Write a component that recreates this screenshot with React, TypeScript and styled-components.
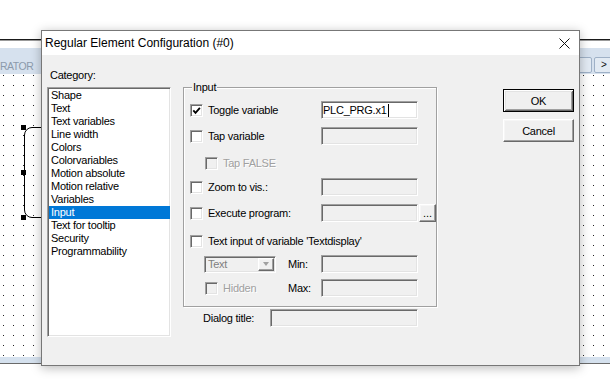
import React from "react";
import styled, { createGlobalStyle, css } from "styled-components";

const UI_FONT = `"Liberation Sans", Arial, sans-serif`;

const GlobalStyle = createGlobalStyle`
  html, body { margin: 0; padding: 0; background: #ffffff; }
  body { font-family: ${UI_FONT}; }
`;

const sunken = css`
  border: 1px solid;
  border-color: #a0a0a0 #ffffff #ffffff #a0a0a0;
  box-shadow: inset 1px 1px 0 #696969, inset -1px -1px 0 #e3e3e3;
`;

const raised = css`
  border: 1px solid;
  border-color: #ffffff #696969 #696969 #ffffff;
  box-shadow: inset -1px -1px 0 #a0a0a0, inset 1px 1px 0 #f6f6f6;
`;

/* ---------- background editor ---------- */

const Screen = styled.div`
  position: relative;
  width: 610px;
  height: 380px;
  display: flex;
  flex-direction: column;
  background: #ffffff;
  overflow: hidden;
`;

const TopSpace = styled.div`
  flex: none;
  height: 39px;
`;

const EditorRule = styled.div`
  flex: none;
  height: 1px;
  background: #1a1a1a;
  border-bottom: 1px solid #9a9a9a;
`;

const ToolbarGap = styled.div`
  flex: none;
  height: 7px;
`;

const Toolbar = styled.div`
  flex: none;
  height: 26px;
  background: #d6e1ee;
  display: flex;
  justify-content: space-between;
  align-items: flex-start;
`;

const ToolbarCaption = styled.span`
  padding-top: 12px;
  font-size: 10.5px;
  line-height: 12px;
  letter-spacing: -0.5px;
  color: #8c9aab;
`;

const ToolbarTools = styled.div`
  display: flex;
  gap: 2px;
  padding-top: 9px;
  margin-right: -4px;
`;

const ToolButton = styled.span`
  width: 14px;
  height: 16px;
  box-sizing: border-box;
  border: 1px solid #9fb1c7;
  border-radius: 2px;
  background: #e2eaf3;
  font-size: 10px;
  line-height: 14px;
  color: #111;
  text-align: center;
  & + & {
    width: 20px;
  }
`;

const Canvas = styled.div`
  position: relative;
  flex: 1;
  background-color: #ffffff;
  background-image: conic-gradient(at 1px 1px, transparent 75%, #222 0);
  background-size: 10px 10px;
  background-position: 3px 1px;
`;

const ElementShape = styled.div`
  position: absolute;
  left: 24px;
  top: 53px;
  width: 60px;
  height: 91px;
  box-sizing: border-box;
  border: 1px solid #000;
  border-radius: 8px;
`;

const Handle = styled.div<{ $top: number }>`
  position: absolute;
  left: 21px;
  top: ${(p) => p.$top}px;
  width: 5px;
  height: 5px;
  background: #000;
`;

const BottomBand = styled.div`
  flex: none;
  height: 6px;
  background: #d5e1ee;
  border-bottom: 1px solid #6a6a6a;
`;

const BottomSpace = styled.div`
  flex: none;
  height: 16px;
`;

/* ---------- dialog window ---------- */

const Dialog = styled.div`
  position: absolute;
  left: 41px;
  top: 30px;
  width: 539px;
  height: 336px;
  box-sizing: border-box;
  border: 1px solid #777777;
  box-shadow: 0 2px 10px rgba(0, 0, 0, 0.28);
  display: flex;
  flex-direction: column;
  background: #f0f0f0;
  z-index: 1;
`;

const TitleBar = styled.div`
  flex: none;
  height: 24px;
  background: #ffffff;
  display: flex;
  align-items: center;
  justify-content: space-between;
  padding-left: 3px;
`;

const TitleText = styled.span`
  font-size: 12px;
  line-height: 14px;
  color: #000;
`;

const CloseGlyph = styled.svg`
  width: 11px;
  height: 11px;
  margin-right: 9px;
  display: block;
  stroke: #111;
  stroke-width: 1;
  fill: none;
`;

const DialogBody = styled.div`
  flex: 1;
  display: flex;
  align-items: flex-start;
  padding: 14px 0 0 5px;
  font-size: 11px;
  letter-spacing: -0.25px;
  color: #000;
`;

const CategoryColumn = styled.div`
  width: 124px;
  display: flex;
  flex-direction: column;
`;

const FieldCaption = styled.div`
  line-height: 13px;
  padding-left: 3px;
  margin-bottom: 5px;
`;

const CategoryList = styled.div`
  height: 250px;
  box-sizing: border-box;
  ${sunken};
  background: #ffffff;
  padding: 1px 0 0 1px;
`;

const CategoryItem = styled.div<{ $selected?: boolean }>`
  height: 13px;
  line-height: 13px;
  padding-left: 2px;
  white-space: nowrap;
  background: ${(p) => (p.$selected ? "#0078d7" : "transparent")};
  color: ${(p) => (p.$selected ? "#ffffff" : "#000000")};
`;

const SettingsColumn = styled.div`
  width: 255px;
  margin: 18px 0 0 12px;
  display: flex;
  flex-direction: column;
`;

const GroupBox = styled.div`
  position: relative;
  width: 254px;
  height: 220px;
  box-sizing: border-box;
  border: 1px solid #a0a0a0;
  box-shadow: 1px 1px 0 #ffffff, inset 1px 1px 0 #ffffff;
  padding-left: 6px;
  display: flex;
  flex-direction: column;
`;

const GroupLegend = styled.span`
  position: absolute;
  top: -7px;
  left: 8px;
  padding: 0 1px;
  line-height: 13px;
  background: #f0f0f0;
`;

const OptionRow = styled.div<{ $mt: number }>`
  display: grid;
  grid-template-columns: 131px 97px 18px;
  align-items: center;
  height: 18px;
  margin-top: ${(p) => p.$mt}px;
`;

const CheckItem = styled.label<{ $indent?: number; $disabled?: boolean; $span?: boolean }>`
  display: flex;
  align-items: center;
  gap: 5px;
  padding-left: ${(p) => p.$indent ?? 0}px;
  white-space: nowrap;
  line-height: 13px;
  color: ${(p) => (p.$disabled ? "#a0a0a0" : "#000000")};
  text-shadow: ${(p) => (p.$disabled ? "1px 1px 0 #ffffff" : "none")};
  ${(p) => (p.$span ? "grid-column: 1 / -1;" : "")}
`;

const CheckBoxFrame = styled.span<{ $disabled?: boolean }>`
  flex: none;
  width: 13px;
  height: 13px;
  box-sizing: border-box;
  ${sunken};
  background: ${(p) => (p.$disabled ? "#f0f0f0" : "#ffffff")};
  display: flex;
  align-items: center;
  justify-content: center;
`;

const CheckMark = styled.svg`
  width: 9px;
  height: 9px;
  display: block;
`;

const TextField = styled.div<{ $active?: boolean; $width?: number }>`
  width: ${(p) => p.$width ?? 97}px;
  height: 18px;
  box-sizing: border-box;
  ${sunken};
  background: ${(p) => (p.$active ? "#ffffff" : "#f0f0f0")};
  padding-left: 1px;
  display: flex;
  align-items: center;
  line-height: 13px;
  white-space: nowrap;
`;

const Caret = styled.span`
  display: inline-block;
  width: 1px;
  height: 13px;
  margin-left: 1px;
  background: #000;
`;

const EllipsisButton = styled.div`
  width: 17px;
  height: 18px;
  margin-left: 1px;
  box-sizing: border-box;
  ${raised};
  display: flex;
  align-items: center;
  justify-content: center;
  line-height: 13px;
  letter-spacing: 0;
`;

const IndentedPair = styled.div`
  display: grid;
  grid-template-columns: 84px auto;
  align-items: center;
  padding-left: 14px;
`;

const ComboBox = styled.div`
  width: 72px;
  height: 17px;
  box-sizing: border-box;
  ${sunken};
  background: #f0f0f0;
  padding: 1px;
  display: flex;
  align-items: stretch;
  justify-content: space-between;
`;

const ComboText = styled.span`
  padding-left: 2px;
  line-height: 13px;
  color: #808080;
`;

const ComboArrowButton = styled.span`
  width: 16px;
  box-sizing: border-box;
  ${raised};
  display: flex;
  align-items: center;
  justify-content: center;
`;

const ComboArrow = styled.span`
  width: 0;
  height: 0;
  border-left: 3.5px solid transparent;
  border-right: 3.5px solid transparent;
  border-top: 4px solid #a0a0a0;
`;

const RowLabel = styled.span<{ $width?: number }>`
  line-height: 13px;
  white-space: nowrap;
  ${(p) => (p.$width ? `width: ${p.$width}px;` : "")}
`;

const TitleRow = styled.div`
  display: flex;
  align-items: center;
  height: 18px;
  margin-top: 2px;
  padding-left: 20px;
`;

const ButtonColumn = styled.div`
  margin: 20px 0 0 65px;
  display: flex;
  flex-direction: column;
  gap: 7px;
`;

const PushButton = styled.button<{ $default?: boolean }>`
  width: 71px;
  height: 23px;
  box-sizing: border-box;
  padding: 0;
  font-family: ${UI_FONT};
  font-size: 11px;
  letter-spacing: -0.25px;
  color: #000;
  background: #f0f0f0;
  ${(p) =>
    p.$default
      ? css`
          border: 1px solid #000;
          box-shadow: inset 1px 1px 0 #ffffff, inset -1px -1px 0 #696969,
            inset 2px 2px 0 #e3e3e3, inset -2px -2px 0 #a0a0a0;
        `
      : raised};
`;

function CheckBox({ checked, disabled }: { checked?: boolean; disabled?: boolean }) {
  return (
    <CheckBoxFrame $disabled={disabled}>
      {checked && (
        <CheckMark viewBox="0 0 9 9">
          <path d="M1.3 4.3 L3.5 6.8 L7.9 1.8" fill="none" stroke="#000" strokeWidth="1.8" />
        </CheckMark>
      )}
    </CheckBoxFrame>
  );
}

const categories = [
  "Shape",
  "Text",
  "Text variables",
  "Line width",
  "Colors",
  "Colorvariables",
  "Motion absolute",
  "Motion relative",
  "Variables",
  "Input",
  "Text for tooltip",
  "Security",
  "Programmability",
];

export default function App() {
  return (
    <>
      <GlobalStyle />
      <Screen>
        <TopSpace />
        <EditorRule />
        <ToolbarGap />
        <Toolbar>
          <ToolbarCaption>RATOR</ToolbarCaption>
          <ToolbarTools>
            <ToolButton />
            <ToolButton>&gt;</ToolButton>
          </ToolbarTools>
        </Toolbar>
        <Canvas>
          <ElementShape />
          <Handle $top={51} />
          <Handle $top={96} />
          <Handle $top={141} />
        </Canvas>
        <BottomBand />
        <BottomSpace />

        <Dialog>
          <TitleBar>
            <TitleText>Regular Element Configuration (#0)</TitleText>
            <CloseGlyph viewBox="0 0 11 11">
              <path d="M0.5 0.5 L10.5 10.5 M10.5 0.5 L0.5 10.5" />
            </CloseGlyph>
          </TitleBar>
          <DialogBody>
            <CategoryColumn>
              <FieldCaption>Category:</FieldCaption>
              <CategoryList>
                {categories.map((c) => (
                  <CategoryItem key={c} $selected={c === "Input"}>
                    {c}
                  </CategoryItem>
                ))}
              </CategoryList>
            </CategoryColumn>

            <SettingsColumn>
              <GroupBox>
                <GroupLegend>Input</GroupLegend>
                <OptionRow $mt={13}>
                  <CheckItem>
                    <CheckBox checked />
                    <span>Toggle variable</span>
                  </CheckItem>
                  <TextField $active>
                    PLC_PRG.x1
                    <Caret />
                  </TextField>
                </OptionRow>
                <OptionRow $mt={8}>
                  <CheckItem>
                    <CheckBox />
                    <span>Tap variable</span>
                  </CheckItem>
                  <TextField />
                </OptionRow>
                <OptionRow $mt={9}>
                  <CheckItem $indent={15} $disabled>
                    <CheckBox disabled />
                    <span>Tap FALSE</span>
                  </CheckItem>
                </OptionRow>
                <OptionRow $mt={6}>
                  <CheckItem>
                    <CheckBox />
                    <span>Zoom to vis.:</span>
                  </CheckItem>
                  <TextField />
                </OptionRow>
                <OptionRow $mt={8}>
                  <CheckItem>
                    <CheckBox />
                    <span>Execute program:</span>
                  </CheckItem>
                  <TextField />
                  <EllipsisButton>...</EllipsisButton>
                </OptionRow>
                <OptionRow $mt={10}>
                  <CheckItem $span>
                    <CheckBox />
                    <span>Text input of variable 'Textdisplay'</span>
                  </CheckItem>
                </OptionRow>
                <OptionRow $mt={5}>
                  <IndentedPair>
                    <ComboBox>
                      <ComboText>Text</ComboText>
                      <ComboArrowButton>
                        <ComboArrow />
                      </ComboArrowButton>
                    </ComboBox>
                    <RowLabel>Min:</RowLabel>
                  </IndentedPair>
                  <TextField />
                </OptionRow>
                <OptionRow $mt={6}>
                  <IndentedPair>
                    <CheckItem $indent={1} $disabled>
                      <CheckBox disabled />
                      <span>Hidden</span>
                    </CheckItem>
                    <RowLabel>Max:</RowLabel>
                  </IndentedPair>
                  <TextField />
                </OptionRow>
              </GroupBox>
              <TitleRow>
                <RowLabel $width={67}>Dialog title:</RowLabel>
                <TextField $width={148} />
              </TitleRow>
            </SettingsColumn>

            <ButtonColumn>
              <PushButton $default>OK</PushButton>
              <PushButton>Cancel</PushButton>
            </ButtonColumn>
          </DialogBody>
        </Dialog>
      </Screen>
    </>
  );
}
